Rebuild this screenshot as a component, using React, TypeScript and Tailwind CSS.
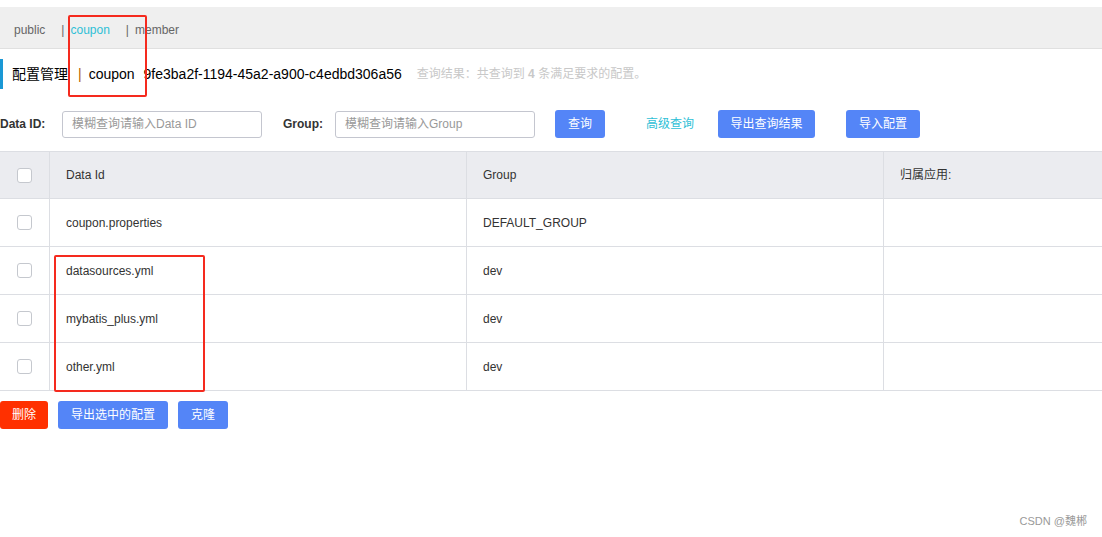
import { useState } from "react";

const rows = [
  { id: "coupon.properties", group: "DEFAULT_GROUP" },
  { id: "datasources.yml", group: "dev" },
  { id: "mybatis_plus.yml", group: "dev" },
  { id: "other.yml", group: "dev" },
];

function Box() {
  return <span className="block w-[15px] h-[15px] rounded-[3px] border border-[#c5c8ce] bg-white" />;
}

export default function App() {
  const [tab] = useState("coupon");
  const tabs = ["public", "coupon", "member"];

  return (
    <div className="relative w-[1102px] h-[537px] bg-white overflow-hidden text-[#333] font-['Liberation_Sans','Noto_Sans_CJK_SC',sans-serif]">
      {/* namespace tabs */}
      <div className="mt-[7px] h-[42px] bg-[#efefef] border-b border-[#e0e0e0] flex items-center pt-[4px] pl-[14px] text-[12px] text-[#666]">
        {tabs.map((t, i) => (
          <div key={t} className="flex items-center">
            {i > 0 && <span className="text-[#666] mr-[6px]">|</span>}
            <span className={t === tab ? "text-[#2ec0d6] mr-[16px]" : "text-[#666] mr-[16px]"}>{t}</span>
          </div>
        ))}
      </div>

      {/* title */}
      <div className="mt-[10px] h-[30px] flex items-center border-l-[3px] border-[#1a98d5] pl-[9px]">
        <span className="text-[14px] text-black">配置管理</span>
        <span className="text-[14px] text-[#b46200] ml-[10px] mr-[7px]">|</span>
        <span className="text-[14px] text-black">coupon</span>
        <span className="text-[14px] text-black ml-[9px]">9fe3ba2f-1194-45a2-a900-c4edbd306a56</span>
        <span className="text-[12px] text-[#c8c8c8] ml-[15px]">
          查询结果：共查询到 <b className="font-bold">4</b> 条满足要求的配置。
        </span>
      </div>

      {/* search */}
      <div className="mt-[21px] h-[28px] flex items-center text-[12px]">
        <span className="font-bold text-[#333] w-[62px]">Data ID:</span>
        <div className="w-[200px] h-[27px] border border-[#c4c6cf] rounded-[3px] flex items-center px-[9px] text-[#999]">模糊查询请输入Data ID</div>
        <span className="font-bold text-[#333] ml-[21px] w-[52px]">Group:</span>
        <div className="w-[200px] h-[27px] border border-[#c4c6cf] rounded-[3px] flex items-center px-[9px] text-[#999]">模糊查询请输入Group</div>
        <button className="ml-[20px] w-[50px] h-[28px] rounded-[3px] bg-[#5485f7] text-white text-[12px]">查询</button>
        <span className="ml-[41px] text-[#2ec0d6]">高级查询</span>
        <button className="ml-[24px] w-[97px] h-[28px] rounded-[3px] bg-[#5485f7] text-white text-[12px]">导出查询结果</button>
        <button className="ml-[31px] w-[74px] h-[28px] rounded-[3px] bg-[#5485f7] text-white text-[12px]">导入配置</button>
      </div>

      {/* table */}
      <div className="mt-[13px] text-[12px] text-[#333]">
        <div className="grid grid-cols-[50px_417px_417px_1fr] h-[48px] bg-[#ebecf0] border-y border-[#dcdee3]">
          <div className="flex items-center justify-center border-r border-[#dcdee3]"><Box /></div>
          <div className="flex items-center pl-[16px] border-r border-[#dcdee3]">Data Id</div>
          <div className="flex items-center pl-[16px] border-r border-[#dcdee3]">Group</div>
          <div className="flex items-center pl-[16px]">归属应用:</div>
        </div>
        {rows.map((r) => (
          <div key={r.id} className="grid grid-cols-[50px_417px_417px_1fr] h-[48px] border-b border-[#dcdee3]">
            <div className="flex items-center justify-center border-r border-[#dcdee3]"><Box /></div>
            <div className="flex items-center pl-[16px] border-r border-[#dcdee3]">{r.id}</div>
            <div className="flex items-center pl-[16px] border-r border-[#dcdee3]">{r.group}</div>
            <div />
          </div>
        ))}
      </div>

      {/* bottom actions */}
      <div className="mt-[10px] flex items-center gap-[10px] text-[12px]">
        <button className="w-[48px] h-[28px] rounded-[3px] bg-[#ff3000] text-white">删除</button>
        <button className="w-[110px] h-[28px] rounded-[3px] bg-[#5485f7] text-white">导出选中的配置</button>
        <button className="w-[50px] h-[28px] rounded-[3px] bg-[#5485f7] text-white">克隆</button>
      </div>

      {/* watermark */}
      <div className="absolute right-[15px] bottom-[8px] text-[11px] text-[#999]">CSDN @魏郴</div>

      {/* red annotation boxes */}
      <div className="absolute left-[68px] top-[15px] w-[79px] h-[82px] border-2 border-[#f52a1e] rounded-[2px]" />
      <div className="absolute left-[54px] top-[255px] w-[151px] h-[137px] border-2 border-[#f52a1e] rounded-[2px]" />
    </div>
  );
}
